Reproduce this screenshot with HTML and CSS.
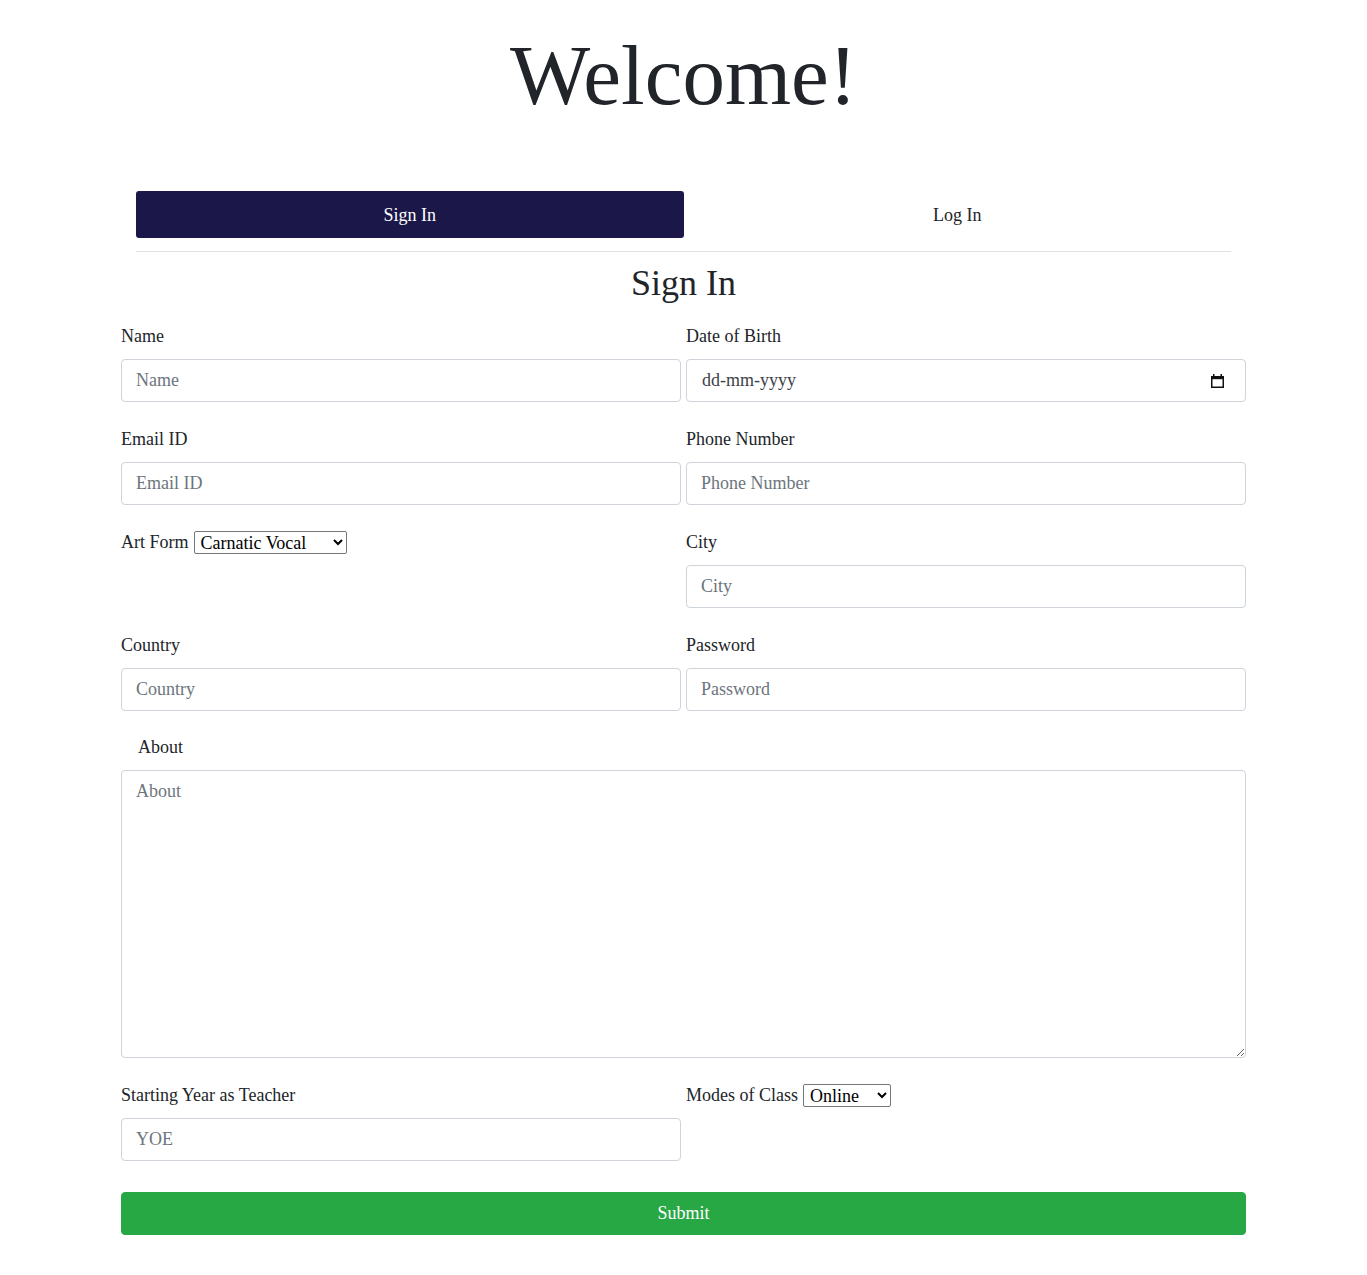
FILE: index.html
```html
<!DOCTYPE html>
<html lang="en">
<head>
<meta charset="utf-8">
<title>Welcome</title>
<link rel="stylesheet" href="styles.css">
</head>
<body>
<div class="page">
  <h1 class="welcome">Welcome!</h1>

  <nav class="tabs">
    <a class="tab tab-active" href="#">Sign In</a>
    <a class="tab" href="#">Log In</a>
  </nav>

  <h2 class="form-title">Sign In</h2>

  <form class="form">
    <div class="grid">
      <div class="group">
        <label class="label">Name</label>
        <input class="control" type="text" placeholder="Name">
      </div>
      <div class="group">
        <label class="label">Date of Birth</label>
        <div class="control date-control">
          <span class="date-text">dd-mm-yyyy</span>
          <svg class="cal-icon" width="15" height="16" viewBox="0 0 15 16" aria-hidden="true">
            <rect x="1" y="3" width="13" height="3.2" fill="#111"/>
            <rect x="1.75" y="3.75" width="11.5" height="10.5" fill="none" stroke="#111" stroke-width="1.5"/>
            <rect x="3" y="1" width="1.5" height="3" fill="#111"/>
            <rect x="10.5" y="1" width="1.5" height="3" fill="#111"/>
          </svg>
        </div>
      </div>

      <div class="group">
        <label class="label">Email ID</label>
        <input class="control" type="text" placeholder="Email ID">
      </div>
      <div class="group">
        <label class="label">Phone Number</label>
        <input class="control" type="text" placeholder="Phone Number">
      </div>

      <div class="group">
        <div class="inline-label">
          <label class="label-inline">Art Form</label>
          <select class="native-select select-art">
            <option>Carnatic Vocal</option>
          </select>
        </div>
      </div>
      <div class="group">
        <label class="label">City</label>
        <input class="control" type="text" placeholder="City">
      </div>

      <div class="group">
        <label class="label">Country</label>
        <input class="control" type="text" placeholder="Country">
      </div>
      <div class="group">
        <label class="label">Password</label>
        <input class="control" type="password" placeholder="Password">
      </div>

      <div class="group group-wide">
        <label class="label label-indent">About</label>
        <textarea class="control textarea" placeholder="About"></textarea>
      </div>

      <div class="group">
        <label class="label">Starting Year as Teacher</label>
        <input class="control" type="text" placeholder="YOE">
      </div>
      <div class="group">
        <div class="inline-label">
          <label class="label-inline">Modes of Class</label>
          <select class="native-select select-mode">
            <option>Online</option>
          </select>
        </div>
      </div>
    </div>

    <button class="submit" type="button">Submit</button>
  </form>
</div>
</body>
</html>
```

FILE: styles.css
```css
* {
  box-sizing: border-box;
}

html {
  font-size: 18px;
}

body {
  margin: 0;
  background: #ffffff;
  color: #212529;
  font-family: "Liberation Serif", "Times New Roman", serif;
  font-size: 18px;
  line-height: 1.5;
}

.page {
  width: 1125px;
  margin: 0 auto;
  padding-top: 24px;
  padding-bottom: 40px;
}

.welcome {
  margin: 0;
  text-align: center;
  font-size: 85px;
  font-weight: 400;
  line-height: 1.2;
  color: #212529;
}

.tabs {
  display: flex;
  margin: 65px 15px 0;
  padding-bottom: 13px;
  border-bottom: 1px solid #dee2e6;
}

.tab {
  flex: 1;
  height: 47px;
  padding-top: 2px;
  display: flex;
  align-items: center;
  justify-content: center;
  color: #212529;
  text-decoration: none;
  border-radius: 3px;
}

.tab-active {
  background: #1b1849;
  color: #ffffff;
}

.form-title {
  margin: 10px 0 18px;
  text-align: center;
  font-size: 36px;
  font-weight: 400;
  line-height: 1.2;
}

.grid {
  display: grid;
  grid-template-columns: 560px 560px;
  column-gap: 5px;
  row-gap: 23.8px;
}

.group {
  display: flex;
  flex-direction: column;
}

.group-wide {
  grid-column: 1 / 3;
}

.label {
  display: block;
  line-height: 27px;
  margin-bottom: 9px;
}

.label-indent {
  padding-left: 17px;
}

.inline-label {
  display: flex;
  align-items: center;
  height: 27px;
}

.label-inline {
  line-height: 27px;
  margin-right: 5px;
}

.control {
  display: block;
  width: 100%;
  height: 43px;
  padding: 6px 14px;
  font-family: inherit;
  font-size: 18px;
  line-height: 27px;
  color: #495057;
  background: #ffffff;
  border: 1px solid #ced4da;
  border-radius: 4px;
  outline: none;
}

.control::placeholder {
  color: #6c757d;
  opacity: 1;
}

.date-control {
  position: relative;
  display: flex;
  align-items: center;
  padding-left: 15px;
}

.date-text {
  color: #3d4248;
}

.cal-icon {
  position: absolute;
  right: 20px;
  top: 13px;
}

.textarea {
  height: 288px;
  resize: vertical;
  padding-top: 7px;
}

.native-select {
  font-family: inherit;
  font-size: 18px;
  line-height: normal;
  height: 23px;
  padding: 0 0 0 2px;
  color: #000000;
  background: #ffffff;
  border: 1px solid #767676;
  border-radius: 2px;
}

.select-art {
  width: 153px;
}

.select-mode {
  width: 88px;
}

.submit {
  display: block;
  width: 100%;
  height: 43px;
  margin-top: 31px;
  font-family: inherit;
  font-size: 18px;
  color: #ffffff;
  background: #28a745;
  border: 1px solid #28a745;
  border-radius: 4px;
}
```
